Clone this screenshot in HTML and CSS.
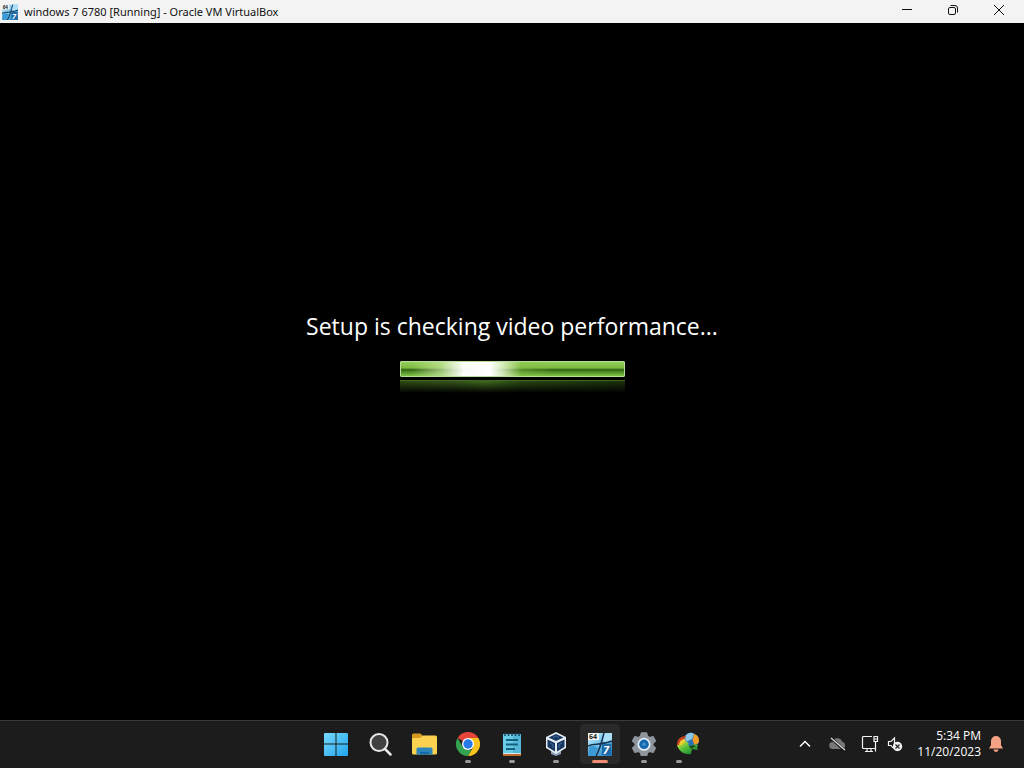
FILE: index.html
```html
<!DOCTYPE html>
<html lang="en">
<head>
<meta charset="utf-8">
<meta name="viewport" content="width=device-width, initial-scale=1">
<title>windows 7 6780 [Running] - Oracle VM VirtualBox</title>
<link rel="stylesheet" href="styles.css">
</head>
<body>
<svg class="defs" width="0" height="0" aria-hidden="true">
  <defs>
    <linearGradient id="sky" x1="0" y1="0" x2="1" y2="1"><stop offset="0" stop-color="#d5f0fb"/><stop offset=".5" stop-color="#6cc0ea"/><stop offset="1" stop-color="#176fb4"/></linearGradient>
    <symbol id="vm" viewBox="0 0 24 24">
      <path fill="url(#sky)" d="M0 1h24v23H0z"/>
      <path fill="#a8e0f7" d="M15 1h9v8c-4 2-8 1-11-1z"/>
      <path fill="#3b9ad6" d="M1 15c4-2 7-1 9 1l-3 8H0z"/>
      <path d="M16 1c-2 8-4 16-8 23M0 14c7-3 12 0 24-5" fill="none" stroke="#143250" stroke-width="1.500"/>
      <path fill="#f4f4f2" d="M0 1h11v7H0z"/>
      <text x="1" y="7" font-size="7" font-weight="700" fill="#222">64</text>
      <path fill="#1d69a8" d="M14 12h9v11h-9z"/>
      <text x="15" y="22" font-size="11" font-style="italic" font-weight="700" fill="#fff">7</text>
    </symbol>
  </defs>
</svg>
<div class="screen">
  <header class="titlebar">
    <svg class="app-icon" viewBox="0 0 24 24" aria-hidden="true"><use href="#vm"/></svg>
    <h1 class="title">windows 7 6780 [Running] - Oracle VM VirtualBox</h1>
    <div class="controls">
      <button class="control" aria-label="Minimize"><svg width="12" height="12" viewBox="0 0 12 12"><path d="M1 5.500h10"/></svg></button>
      <button class="control" aria-label="Restore"><svg width="12" height="12" viewBox="0 0 12 12"><rect x="1.500" y="3.500" width="7" height="7" rx="1.500"/><path d="M3.500 1.500H8a2.500 2.500 0 0 1 2.500 2.500v4.500"/></svg></button>
      <button class="control" aria-label="Close"><svg width="12" height="12" viewBox="0 0 12 12"><path d="M1 1l10 10M11 1L1 11"/></svg></button>
    </div>
  </header>

  <main class="stage">
    <p class="message" id="status">Setup is checking video performance...</p>
    <div class="progress" role="progressbar" aria-labelledby="status">
      <div class="bar"></div>
      <div class="reflection"></div>
    </div>
  </main>

  <footer class="taskbar">
    <nav class="apps" aria-label="Taskbar">
      <button class="app" aria-label="Start">
        <svg width="24" height="24" viewBox="0 0 24 24"><defs><linearGradient id="win" x1="0" y1="0" x2="1" y2="1"><stop offset="0" stop-color="#77d9fc"/><stop offset="1" stop-color="#20a5ee"/></linearGradient></defs><path fill="url(#win)" d="M1 1h10.500v10.500H0V2a1 1 0 0 1 1-1zM12.500 1H23a1 1 0 0 1 1 1v9.500H12.500zM0 12.500h11.500V24H1a1 1 0 0 1-1-1zM12.500 12.500H24V23a1 1 0 0 1-1 1H12.500z"/></svg>
      </button>
      <button class="app" aria-label="Search">
        <svg width="24" height="24" viewBox="0 0 24 24"><circle cx="11" cy="10.500" r="8.500" fill="#414141" stroke="#e8e8e8" stroke-width="2"/><path d="M17 17l5.500 5.500" stroke="#e8e8e8" stroke-width="2.500" stroke-linecap="round"/></svg>
      </button>
      <button class="app" aria-label="File Explorer">
        <svg width="26" height="24" viewBox="0 0 26 24"><path fill="#d79a20" d="M1 3a1.500 1.500 0 0 1 1.500-1.500h7L12 4v4H1z"/><path fill="#fbd250" d="M1 6h8l3-2.500h12.500A1.500 1.500 0 0 1 26 5v16a1.500 1.500 0 0 1-1.500 1.500h-22A1.500 1.500 0 0 1 1 21z"/><path fill="#2c86bd" d="M5.500 22.500V17a1.500 1.500 0 0 1 1.500-1.500h13a1.500 1.500 0 0 1 1.500 1.500v5.500z"/><path fill="#176aa6" d="M9 22.500V20h9v2.500z"/></svg>
      </button>
      <button class="app running" aria-label="Google Chrome">
        <svg width="24" height="24" viewBox="0 0 24 24"><path fill="#e5453a" d="M12 12L1.600 6a12 12 0 0 1 20.800 0z"/><path fill="#fbc31b" d="M12 6h10.400A12 12 0 0 1 12 24l5.200-9z"/><path fill="#34a350" d="M1.600 6l5.200 9 5.200 3h3.500L12 24A12 12 0 0 1 1.600 6z"/><circle cx="12" cy="12" r="6" fill="#fff"/><circle cx="12" cy="12" r="4.700" fill="#2879e8"/></svg>
      </button>
      <button class="app running" aria-label="Notepad">
        <svg width="20" height="24" viewBox="0 0 20 24"><path fill="#69cde9" d="M1 2h18v20H1z"/><path fill="#55b7d8" d="M11 2h8v20h-8z"/><path fill="#dbe9eb" d="M1 21h18v1.500H1z"/><path fill="#b96b30" d="M1 22h18v2H1z"/><path d="M3 1v3M6.500 1v3M10 1v3M13.500 1v3M17 1v3" stroke="#16485d" stroke-width="1.500"/><path d="M4 8h12M4 12.500h12M4 17h9" stroke="#14617c" stroke-width="2"/></svg>
      </button>
      <button class="app running" aria-label="Oracle VM VirtualBox">
        <svg width="22" height="24" viewBox="0 0 22 24"><path fill="#8aa0b8" d="M6 17h10v5l-5 2-5-2z"/><path fill="#e5edf5" d="M11 0l10 5v11l-10 6-10-6V5z"/><path fill="#18375f" d="M11 2l7.500 3.500L11 9 3.500 5.500zM2.500 7.500L10 11v8.500l-7.500-4.500zM19.500 7.500L12 11v8.500l7.500-4.500z"/><path d="M5 11l3 1.500v3.500M17 11l-3 1.500v3.500M8 5.500L11 4l3 1.500" fill="none" stroke="#426b9b"/></svg>
      </button>
      <button class="app running active" aria-label="windows 7 6780" aria-current="true">
        <svg width="24" height="24" viewBox="0 0 24 24"><use href="#vm"/></svg>
      </button>
      <button class="app running" aria-label="Settings">
        <svg width="24" height="24" viewBox="0 0 24 24"><path fill="#8e959c" stroke="#8e959c" stroke-width="1.500" stroke-linejoin="round" d="M9.500 1h5l1 3.500 2 1.200 3.500-1 2.300 4.200-2.500 2.600v2l2.500 2.600-2.300 4.200-3.500-1-2 1.200-1 3.500h-5l-1-3.500-2-1.200-3.500 1L.7 16.100l2.500-2.600v-2L.7 8.900 3 4.700l3.500 1 2-1.200z"/><circle cx="12" cy="12.300" r="6.500" fill="#e4eef6"/><circle cx="12" cy="12.300" r="4.800" fill="#1667ae"/><circle cx="12" cy="12.300" r="1.800" fill="#3d91d1"/></svg>
      </button>
      <button class="app running badge-left" aria-label="Internet Download Manager">
        <svg width="24" height="24" viewBox="0 0 24 24"><defs><linearGradient id="arrow" x1="0" y1="0" x2="1" y2="1"><stop offset="0" stop-color="#e8ec3c"/><stop offset=".45" stop-color="#53bd3a"/><stop offset="1" stop-color="#087132"/></linearGradient></defs><ellipse cx="15" cy="8.500" rx="8" ry="7.500" fill="#2b70b7"/><path fill="#8bc8e7" d="M9 5c2-5 7-5 9-3l-2 5-6 3z"/><path fill="#ef9d25" d="M18 2c4 1 6 5 4.500 9l-4 2-2-5z"/><path fill="#c94120" d="M1 13C1 7 5 4 10 4L8 8c-2 1-4 3-5 6z"/><path fill="#f1ce33" d="M3 14c0-4 2-7 6-7l1 4c-2 0-3 1-4 3z"/><path fill="url(#arrow)" d="M1 13h5c1-3 4-4 7-2-1 1-1 2 0 3 3-1 6-2 9-1-1 2-1 4 0 5l-6-1-1 5c-6 1-12-2-14-9z"/><path fill="#164c24" d="M13 14c3-1 5-1 7 0l-5 3z"/></svg>
      </button>
    </nav>
    <div class="tray">
      <button class="tray-button chevron" aria-label="Show hidden icons"><svg width="12" height="8" viewBox="0 0 12 8"><path d="M1 6.500l5-5 5 5" fill="none" stroke="#fff" stroke-width="1.500"/></svg></button>
      <button class="tray-button cloud" aria-label="OneDrive"><svg width="18" height="16" viewBox="0 0 18 16"><path fill="#777" d="M4 13a3.500 3.500 0 0 1-.5-7 5 5 0 0 1 9.500-.500A4 4 0 0 1 14 13z"/><path d="M2 2l13 12" stroke="#1c1c1c" stroke-width="3"/><path d="M2 2l14 12" stroke="#ddd" stroke-width="1.200"/></svg></button>
      <button class="tray-button status" aria-label="Network and volume">
        <svg width="18" height="18" viewBox="0 0 18 18" fill="none" stroke="#f2f2f2" stroke-width="1.200"><path d="M11 1.500H2.500a1 1 0 0 0-1 1v10a1 1 0 0 0 1 1h12M6 13.500v3M10 13.500v3M4 16.500h8"/><path d="M13 1.500h3.500v5H13zM13 4h3.500M14.500 6.500v10"/></svg>
        <svg width="16" height="16" viewBox="0 0 16 16"><path d="M7.500 8V2L4 5.500H1.500v4H4L6 12" fill="none" stroke="#f2f2f2" stroke-width="1.200"/><circle cx="10.500" cy="10.500" r="4.700" fill="#f2f2f2"/><path d="M8.500 8.500l4 4M12.500 8.500l-4 4" stroke="#222" stroke-width="1.200"/></svg>
      </button>
      <button class="tray-button clock"><time datetime="2023-11-20T17:34">5:34 PM<br>11/20/2023</time></button>
      <button class="tray-button" aria-label="Notifications"><svg width="14" height="16" viewBox="0 0 14 16"><path fill="#f4a184" d="M7 0a5 5 0 0 1 5 5v4l2 3.500H0L2 9V5a5 5 0 0 1 5-5zM4.500 13.500h5a2.500 2.500 0 0 1-5 0z"/></svg></button>
    </div>
  </footer>
</div>
</body>
</html>
```
FILE: styles.css
```css
* { box-sizing: border-box; }
body { margin: 0; background: #000; font-family: "Open Sans", "Noto Sans", sans-serif; }
button { padding: 0; border: 0; background: none; color: inherit; font: inherit; }
svg { display: block; flex: none; }
.defs { position: absolute; }
.screen { display: flex; flex-direction: column; min-height: 100vh; }

.titlebar { display: flex; align-items: center; height: 23px; padding-left: 2px; background: #f3f3f3; color: #111; }
.app-icon { width: 16px; height: 16px; }
.title { flex: 1; margin: 0 0 0 6px; font: 400 11px/16px "Noto Sans", sans-serif; white-space: nowrap; }
.controls { display: flex; align-self: stretch; padding-right: 2px; }
.control { display: grid; place-items: center; width: 46px; height: 20px; }
.control path, .control rect { fill: none; stroke: #111; stroke-width: 1; }

.stage { flex: 1; display: flex; flex-direction: column; align-items: center; justify-content: center; gap: 19px; padding-bottom: 40px; }
.message { margin: 0; color: #fff; font-size: 23px; line-height: 32px; }
.progress { display: flex; flex-direction: column; gap: 3px; width: 225px; }
.bar {
  height: 16px;
  border: 1px solid #b5df96;
  border-radius: 1px;
  background:
    linear-gradient(90deg, transparent 5%, #c9e8a3aa 18%, #fffffff5 28%, #fff 40%, #e4f5d0cc 46%, #8bc34a66 54%, transparent 68%),
    linear-gradient(#94ce5d 0%, #7dbb3e 42%, #2f5f17 56%, #48831f 66%, #80c448 100%);
}
.reflection {
  height: 13px;
  border-top: 1px solid #41661f;
  background:
    linear-gradient(transparent, #000),
    linear-gradient(90deg, #2c4c14, #35561a 25%, #426b20 38%, #284712 55%, #1b300e);
}

.taskbar { display: grid; grid-template-columns: 1fr auto 1fr; align-items: center; height: 48px; padding-bottom: 1px; border-top: 1px solid #3a3a3a; background: #1c1c1c; color: #fff; }
.apps { grid-column: 2; display: flex; gap: 4px; }
.app { position: relative; display: grid; place-items: center; width: 40px; height: 40px; border-radius: 4px; }
.running::after { content: ""; position: absolute; bottom: 1px; left: 17px; width: 6px; height: 3px; border-radius: 2px; background: #999; }
.active { background: #292929; }
.active::after { left: 12px; width: 16px; background: #ee8b70; }
.badge-left::after { left: 8px; }
.tray { display: flex; align-items: center; justify-content: flex-end; padding-right: 21px; }
.tray-button { display: flex; align-items: center; }
.chevron { margin-right: 18px; }
.cloud { margin-right: 14px; }
.status { gap: 8px; margin-right: 14px; }
.clock { margin-right: 8px; font-size: 12px; line-height: 16px; text-align: right; }
```
